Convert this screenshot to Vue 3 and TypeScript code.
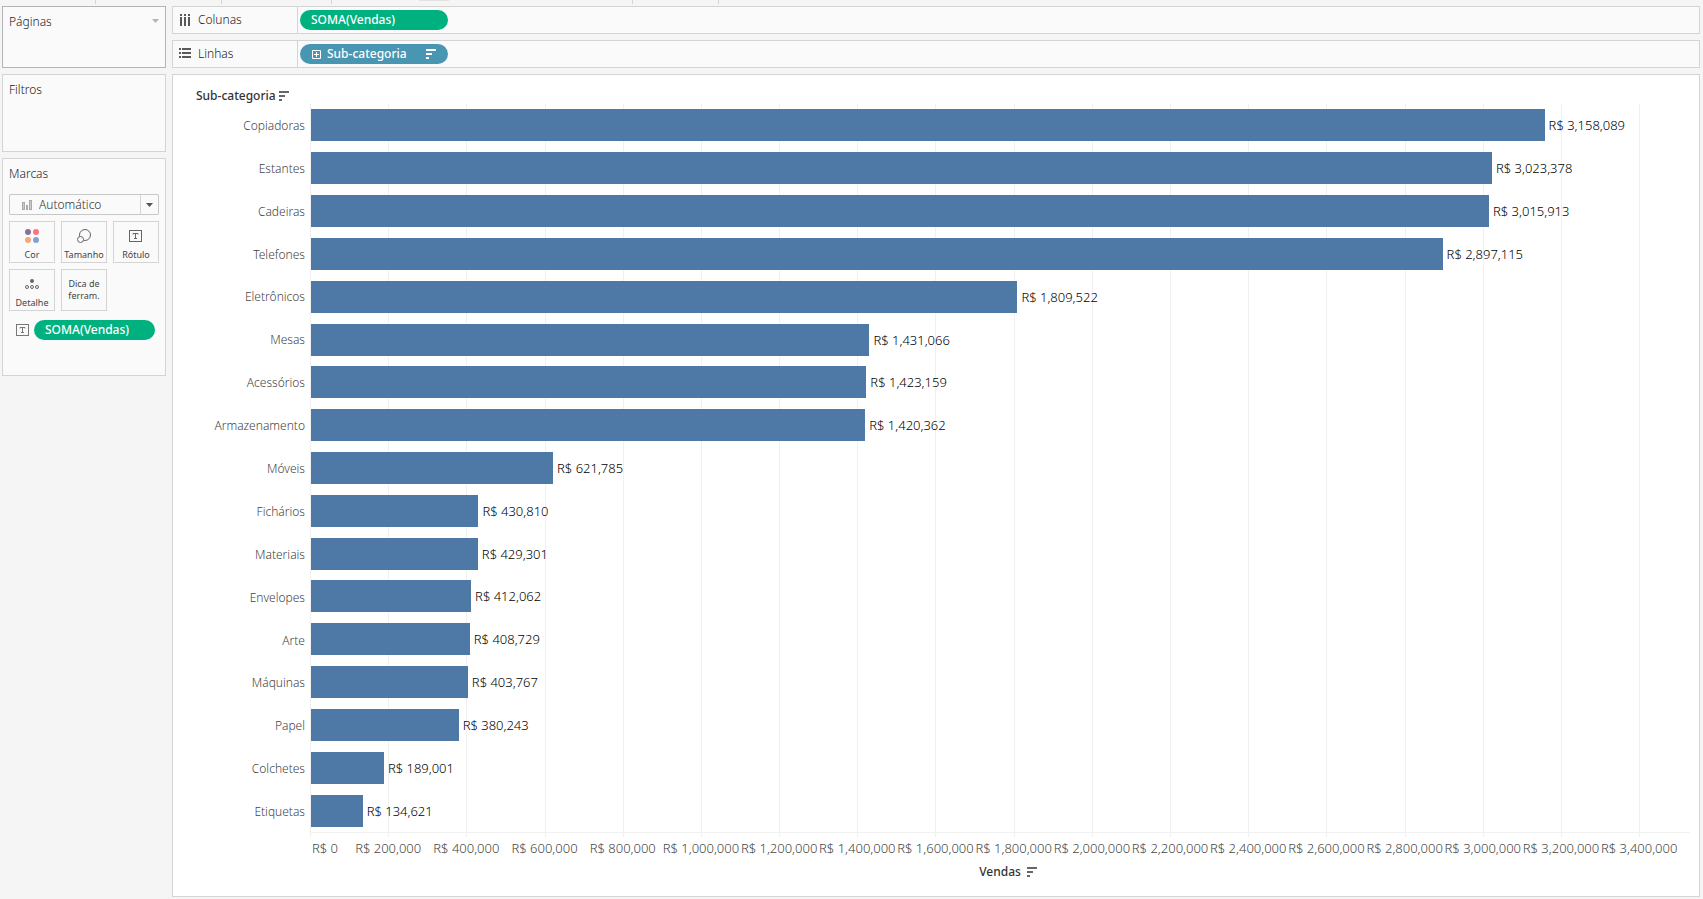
<script setup lang="ts">
interface Row {
  name: string
  value: number
}

const rows: Row[] = [
  { name: 'Copiadoras', value: 3158089 },
  { name: 'Estantes', value: 3023378 },
  { name: 'Cadeiras', value: 3015913 },
  { name: 'Telefones', value: 2897115 },
  { name: 'Eletrônicos', value: 1809522 },
  { name: 'Mesas', value: 1431066 },
  { name: 'Acessórios', value: 1423159 },
  { name: 'Armazenamento', value: 1420362 },
  { name: 'Móveis', value: 621785 },
  { name: 'Fichários', value: 430810 },
  { name: 'Materiais', value: 429301 },
  { name: 'Envelopes', value: 412062 },
  { name: 'Arte', value: 408729 },
  { name: 'Máquinas', value: 403767 },
  { name: 'Papel', value: 380243 },
  { name: 'Colchetes', value: 189001 },
  { name: 'Etiquetas', value: 134621 },
]

const axisMax = 3530000
const ticks: number[] = Array.from({ length: 18 }, (_, i) => i * 200000)

const money = (n: number): string => 'R$ ' + n.toLocaleString('en-US')
const share = (n: number): string => (n / axisMax) * 100 + '%'
</script>

<template>
  <div class="workbook">
    <div class="strip"><i></i><i></i><i></i><i class="tab"></i><i></i></div>

    <div class="workspace">
      <aside class="side">
        <section class="card pages">
          <h2>Páginas</h2>
          <button class="caret" type="button" aria-label="Menu de páginas">
            <svg width="7" height="4" viewBox="0 0 7 4"><path d="M0 0h7L3.500 4z" fill="#b4b4b4" /></svg>
          </button>
        </section>

        <section class="card filters">
          <h2>Filtros</h2>
        </section>

        <section class="card marks">
          <h2><label for="mark-type">Marcas</label></h2>
          <div class="picker">
            <svg class="picker-bars" width="10" height="10" viewBox="0 0 10 10">
              <rect x="0.500" y="2.500" width="2" height="7" fill="#ccc" stroke="#aaa" />
              <rect x="4.500" y="5.500" width="1" height="4" fill="#ccc" stroke="#aaa" />
              <rect x="7.500" y="0.500" width="2" height="9" fill="#ccc" stroke="#aaa" />
            </svg>
            <select id="mark-type">
              <option>Automático</option>
            </select>
            <span class="picker-arrow">
              <svg width="7" height="4" viewBox="0 0 7 4"><path d="M0 0h7L3.500 4z" fill="#555" /></svg>
            </span>
          </div>

          <div class="tiles">
            <button class="tile" type="button">
              <svg width="14" height="14" viewBox="0 0 14 14">
                <circle cx="3" cy="3" r="3" fill="#85719a" />
                <circle cx="11" cy="3" r="3" fill="#fc7483" />
                <circle cx="3" cy="11" r="3" fill="#f5a876" />
                <circle cx="11" cy="11" r="3" fill="#83a2d0" />
              </svg>
              <span>Cor</span>
            </button>
            <button class="tile" type="button">
              <svg width="14" height="14" viewBox="0 0 14 14" fill="#fafafa" stroke="#666">
                <circle cx="8" cy="6" r="5.500" />
                <circle cx="3.500" cy="10.500" r="3" />
              </svg>
              <span>Tamanho</span>
            </button>
            <button class="tile" type="button">
              <svg width="14" height="14" viewBox="0 0 14 14" fill="none" stroke="#666">
                <rect x="0.500" y="1.500" width="12" height="11" />
                <path d="M4 5.500v-1h5v1M6.500 4.500v5M5 9.500h3" />
              </svg>
              <span>Rótulo</span>
            </button>
            <button class="tile" type="button">
              <svg width="14" height="14" viewBox="0 0 14 14" fill="none" stroke="#666">
                <circle cx="7" cy="4" r="2" fill="#666" stroke="none" />
                <circle cx="2" cy="10" r="1.500" />
                <circle cx="7" cy="10" r="1.500" />
                <circle cx="12" cy="10" r="1.500" />
              </svg>
              <span>Detalhe</span>
            </button>
            <button class="tile words" type="button"><span>Dica de ferram.</span></button>
          </div>

          <div class="mark-field">
            <svg width="14" height="12" viewBox="0 0 14 12" fill="none" stroke="#777">
              <rect x="0.500" y="0.500" width="12" height="11" />
              <path d="M4 4.500v-1h5v1M6.500 3.500v5M5 8.500h3" />
            </svg>
            <button class="pill green" type="button">SOMA(Vendas)</button>
          </div>
        </section>
      </aside>

      <main class="main">
        <section class="shelf">
          <h2>
            <svg width="12" height="12" viewBox="0 0 12 12" fill="#595959">
              <path d="M1 0h2v2h-2zM5 0h2v2h-2zM9 0h2v2h-2zM1 3h2v9h-2zM5 3h2v9h-2zM9 3h2v9h-2z" />
            </svg>
            Colunas
          </h2>
          <button class="pill green" type="button">SOMA(Vendas)</button>
        </section>

        <section class="shelf">
          <h2>
            <svg width="12" height="12" viewBox="0 0 12 12" fill="#595959">
              <path d="M0 0h2v2h-2zM0 4h2v2h-2zM0 8h2v2h-2zM3 0h9v2h-9zM3 4h9v2h-9zM3 8h9v2h-9z" />
            </svg>
            Linhas
          </h2>
          <button class="pill blue" type="button">
            <svg width="10" height="10" viewBox="0 0 10 10" fill="none" stroke="#fff">
              <path d="M1.500 1.500h8v8h-8zM3 5.500h5M5.500 3v5" />
            </svg>
            <span>Sub-categoria</span>
            <svg width="10" height="10" viewBox="0 0 10 10" fill="#fff">
              <path d="M0 0h10v2h-10zM0 4h6v2h-6zM0 8h3v2h-3z" />
            </svg>
          </button>
        </section>

        <section class="view">
          <header class="row-header">
            <span>Sub-categoria</span>
            <button class="sort" type="button" aria-label="Classificar Sub-categoria">
              <svg width="10" height="10" viewBox="0 0 10 10" fill="#666">
                <path d="M0 0h10v2h-10zM0 4h6v2h-6zM0 8h3v2h-3z" />
              </svg>
            </button>
          </header>

          <div class="chart">
            <ul class="names">
              <li v-for="r in rows" :key="r.name">{{ r.name }}</li>
            </ul>
            <div class="plot">
              <i v-for="t in ticks" :key="t" class="line" :style="{ left: share(t) }"></i>
              <div v-for="r in rows" :key="r.name" class="lane">
                <div class="bar" :style="{ width: share(r.value) }"></div>
                <span class="value">{{ money(r.value) }}</span>
              </div>
            </div>
            <div class="axis">
              <span v-for="t in ticks" :key="t" class="tick" :style="{ left: share(t) }">{{ money(t) }}</span>
            </div>
            <div class="axis-title">
              <span>Vendas</span>
              <button class="sort" type="button" aria-label="Classificar Vendas">
                <svg width="10" height="10" viewBox="0 0 10 10" fill="#666">
                  <path d="M0 0h10v2h-10zM0 4h6v2h-6zM0 8h3v2h-3z" />
                </svg>
              </button>
            </div>
          </div>
        </section>
      </main>
    </div>
  </div>
</template>

<style>
body {
  margin: 0;
  background: #f5f5f5;
}
</style>

<style scoped>
* {
  box-sizing: border-box;
}

.workbook {
  display: flex;
  flex-direction: column;
  min-height: 100vh;
  background: #f5f5f5;
  color: #222;
  font: 300 12px/16px "Noto Sans", "Open Sans", sans-serif;
}

button,
select {
  margin: 0;
  padding: 0;
  border: 0;
  background: none;
  color: inherit;
  font: inherit;
}

h2 {
  margin: 0;
  font: inherit;
}

svg {
  display: block;
  flex: none;
}

.strip {
  display: grid;
  grid-template-columns: 96px 126px 110px 301px 86px;
  height: 6px;
}

.strip i {
  height: 4px;
  border-right: 1px solid #d4d4d4;
}

.strip .tab::before {
  content: "";
  display: block;
  width: 30px;
  height: 1px;
  margin-left: 87px;
  background: #e2e2e2;
}

.workspace {
  display: flex;
  flex: 1;
  gap: 6px;
  padding: 0 3px 2px 2px;
}

.side {
  display: flex;
  flex: none;
  flex-direction: column;
  gap: 6px;
  width: 164px;
}

.card {
  padding: 7px 6px;
  border: 1px solid #d4d4d4;
  background: #fafafa;
}

.pages {
  display: flex;
  align-items: flex-start;
  justify-content: space-between;
  min-height: 62px;
  border-color: #b4b4b4;
}

.caret {
  padding: 5px 0;
}

.filters {
  min-height: 78px;
}

.marks {
  min-height: 218px;
}

.picker {
  display: flex;
  align-items: center;
  position: relative;
  height: 21px;
  margin-top: 12px;
  border: 1px solid #c8c8c8;
  border-radius: 1px;
}

.picker-bars {
  margin-left: 12px;
}

.picker select {
  flex: 1;
  min-width: 0;
  padding-left: 7px;
  color: #333;
  appearance: none;
}

.picker-arrow {
  display: flex;
  align-items: center;
  justify-content: center;
  width: 18px;
  height: 100%;
  border-left: 1px solid #d4d4d4;
  pointer-events: none;
}

.tiles {
  display: grid;
  grid-template-columns: repeat(3, 1fr);
  gap: 6px;
  margin-top: 6px;
}

.tile {
  display: flex;
  flex-direction: column;
  align-items: center;
  justify-content: space-between;
  height: 42px;
  padding: 7px 0 1px;
  border: 1px solid #d4d4d4;
  color: #444;
  font-size: 9px;
  font-weight: 400;
  line-height: 12px;
}

.words {
  justify-content: center;
  padding: 0 4px;
}

.mark-field {
  display: flex;
  align-items: center;
  gap: 4px;
  margin-top: 9px;
  padding: 0 4px 0 7px;
}

.pill {
  display: flex;
  align-items: center;
  height: 20px;
  padding: 0 12px 0 11px;
  border-radius: 10px;
  color: #fff;
  font-weight: 500;
}

.mark-field .pill {
  flex: 1;
}

.green {
  background: #00b180;
}

.blue {
  background: #4996b2;
}

.blue span {
  flex: 1;
  padding-left: 6px;
  text-align: left;
}

.main {
  display: flex;
  flex: 1;
  flex-direction: column;
  gap: 6px;
  min-width: 0;
}

.shelf {
  display: flex;
  align-items: center;
  height: 28px;
  border: 1px solid #d4d4d4;
  background: #fafafa;
}

.shelf h2 {
  display: flex;
  align-items: center;
  gap: 7px;
  width: 125px;
  height: 100%;
  padding-left: 6px;
  border-right: 1px solid #d4d4d4;
}

.shelf .pill {
  width: 148px;
  margin-left: 2px;
}

.view {
  display: flex;
  flex: 1;
  flex-direction: column;
  padding: 13px 9px 16px 0;
  border: 1px solid #d4d4d4;
  background: #fff;
}

.row-header {
  display: flex;
  align-items: center;
  gap: 3px;
  padding-left: 23px;
  color: #333;
  font-weight: 500;
}

.chart {
  display: grid;
  flex: 1;
  grid-template-columns: 137px 1fr;
  grid-template-rows: 1fr 31px 16px;
}

.names {
  display: grid;
  grid-auto-rows: 1fr;
  align-items: center;
  margin: 0;
  padding: 0 5px 0 0;
  color: #444;
  list-style: none;
  text-align: right;
}

.names li {
  padding-top: 1px;
}

.plot {
  display: grid;
  grid-auto-rows: 1fr;
  position: relative;
  border-bottom: 1px solid #f0f0f0;
}

.line {
  position: absolute;
  top: 0;
  bottom: -5px;
  width: 1px;
  background: #f0f0f0;
}

.lane {
  display: flex;
  align-items: center;
  position: relative;
}

.bar {
  height: 32px;
  border-left: 1px solid #f0f0f0;
  background: #4e79a7;
}

.value {
  padding-left: 4px;
  color: #000;
  font-size: 13px;
  white-space: nowrap;
}

.axis {
  grid-column: 2;
  position: relative;
  color: #444;
  font-size: 13px;
}

.tick {
  position: absolute;
  top: 7px;
  transform: translateX(-50%);
  white-space: nowrap;
}

.tick:first-child {
  padding-left: 2px;
  transform: none;
}

.axis-title {
  display: grid;
  grid-column: 2;
  grid-template-columns: 1fr auto 1fr;
  align-items: center;
  column-gap: 6px;
  color: #333;
  font-weight: 500;
}

.axis-title span {
  grid-column: 2;
}
</style>
